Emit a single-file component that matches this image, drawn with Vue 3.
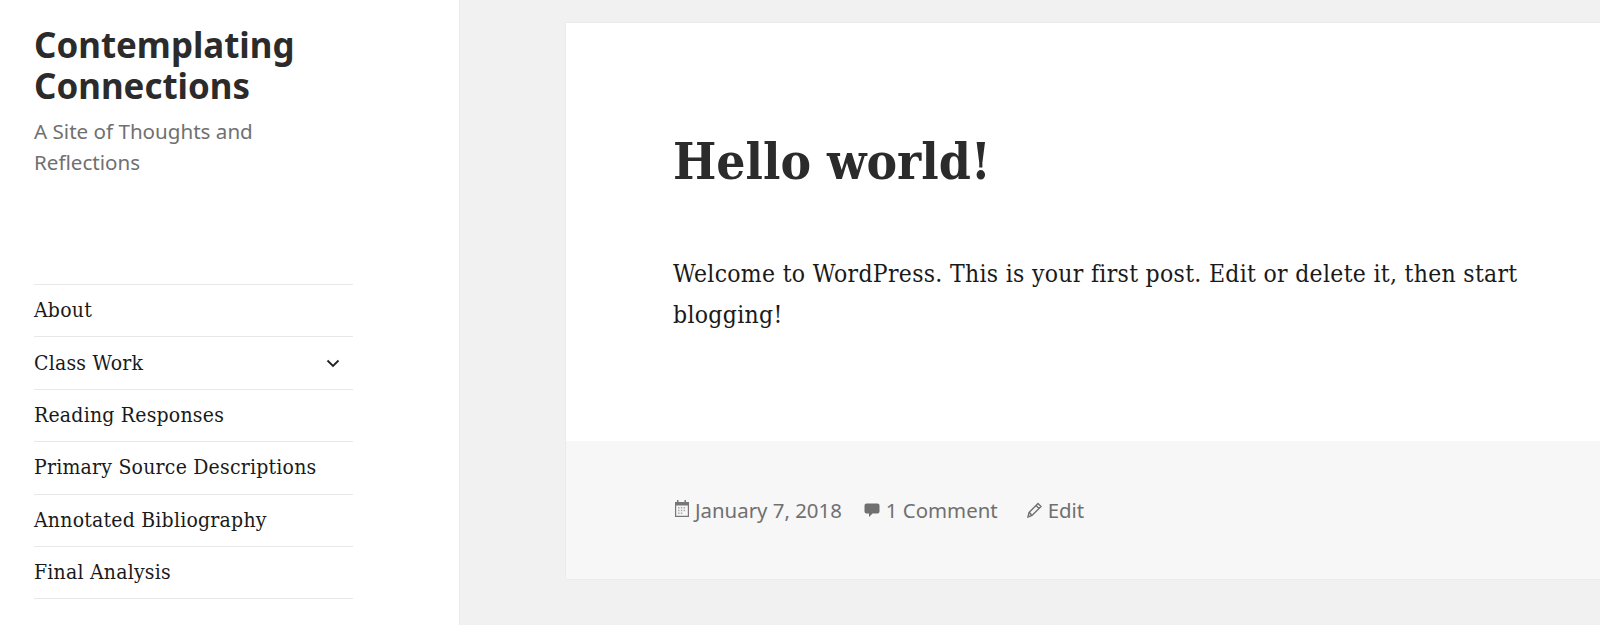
<template>
  <div class="page">
    <aside class="sidebar">
      <h1 class="site-title">Contemplating Connections</h1>
      <p class="tagline">A Site of Thoughts and Reflections</p>
      <ul class="menu">
        <li v-for="item in menu" :key="item.label" class="menu-item">
          <a href="#">{{ item.label }}</a>
          <svg v-if="item.sub" class="chevron" viewBox="0 0 16 16" width="16" height="16">
            <path d="M2.500 5.500 L8 11 L13.500 5.500" fill="none" stroke="#222" stroke-width="1.800" />
          </svg>
        </li>
      </ul>
    </aside>
    <main class="main">
      <article class="post">
        <div class="post-body">
          <h2 class="post-title">Hello world!</h2>
          <p class="post-text">Welcome to WordPress. This is your first post. Edit or delete it, then start blogging!</p>
        </div>
        <footer class="post-footer">
          <span class="meta meta-date">
            <svg class="meta-icon cal" viewBox="0 0 17 17" width="17" height="17">
              <path fill-rule="evenodd" d="M4 0h1.500v2h6V0H13v2h3v15H2V2h2z M3.200 5.500v10.300h11.600V5.500z" fill="#777" />
              <path d="M5 7h1.500v1.500H5z M7.800 7h1.500v1.500H7.800z M10.600 7h1.500v1.500h-1.500z M5 9.800h1.500v1.500H5z M7.800 9.800h1.500v1.500H7.800z M10.600 9.800h1.500v1.500h-1.500z M5 12.600h1.500v1.500H5z M7.800 12.600h1.500v1.500H7.800z" fill="#a8a8a8" />
            </svg>
            January 7, 2018
          </span>
          <span class="meta meta-comment">
            <svg class="meta-icon" viewBox="0 0 16 16" width="16" height="16">
              <path d="M2.500 1.500h11A2 2 0 0 1 15.500 3.500v6a2 2 0 0 1-2 2H8.500l-3.500 3.500V11.500H2.500A2 2 0 0 1 .5 9.500v-6A2 2 0 0 1 2.500 1.500z" fill="#707070" />
            </svg>
            1 Comment
          </span>
          <span class="meta meta-edit">
            <svg class="meta-icon" viewBox="0 0 16 16" width="16" height="16">
              <path d="M12 1.500 L15 4.500 L6 13.500 L2 15 L3 10.500 Z M3.500 10.500 L5.500 13 M10 3.500 L13 6.500" fill="none" stroke="#707070" stroke-width="1.400" />
            </svg>
            Edit
          </span>
        </footer>
      </article>
    </main>
  </div>
</template>

<script setup>
const menu = [
  { label: 'About' },
  { label: 'Class Work', sub: true },
  { label: 'Reading Responses' },
  { label: 'Primary Source Descriptions' },
  { label: 'Annotated Bibliography' },
  { label: 'Final Analysis' }
]
</script>

<style scoped>
.page { display:flex; width:1600px; height:625px; overflow:hidden; background:#f1f1f1; }
.sidebar { width:459px; flex:none; box-sizing:border-box; background:#fff; box-shadow:0 0 1px rgba(0,0,0,.15); padding:24px 100px 0 34px; }
.site-title { margin:0; width:290px; font:700 34.900px/41px "Noto Sans", sans-serif; color:#2b2b2b; }
.tagline { margin:10px 0 0; width:240px; font:400 20.600px/30.500px "Noto Sans", sans-serif; color:#707070; }
.menu { list-style:none; margin:107px 0 0; width:319px; padding:0; border-top:1px solid #e8e8e8; }
.menu-item { display:flex; align-items:center; justify-content:space-between; height:51.400px; padding-right:12px; border-bottom:1px solid #e8e8e8; font:400 21px/1 "DejaVu Serif", serif; font-stretch:condensed; letter-spacing:.22px; }
.menu-item a { color:#1a1a1a; text-decoration:none; }
.main { flex:1; padding:23px 0 0 107px; min-width:0; }
.post { width:1100px; height:556px; background:#fff; box-shadow:0 0 1px rgba(0,0,0,.15); display:flex; flex-direction:column; }
.post-body { flex:1; padding:108px 0 0 107px; }
.post-title { margin:0; font:700 51px/1.200 "DejaVu Serif", serif; font-stretch:condensed; color:#2b2b2b; }
.post-text { margin:61px 0 0; width:880px; font:400 24.500px/41px "DejaVu Serif", serif; font-stretch:condensed; letter-spacing:.3px; color:#1a1a1a; }
.post-footer { height:138px; box-sizing:border-box; background:#f7f7f7; padding:0 0 0 107px; display:flex; align-items:center; font:400 20.400px/1 "Noto Sans", sans-serif; color:#707070; }
.meta { display:flex; align-items:center; gap:6px; }
.cal { margin-right:-1px; margin-top:-3px; }
.meta-comment { margin-left:22px; }
.meta-edit { margin-left:28px; }
.meta-icon { flex:none; }
</style>
